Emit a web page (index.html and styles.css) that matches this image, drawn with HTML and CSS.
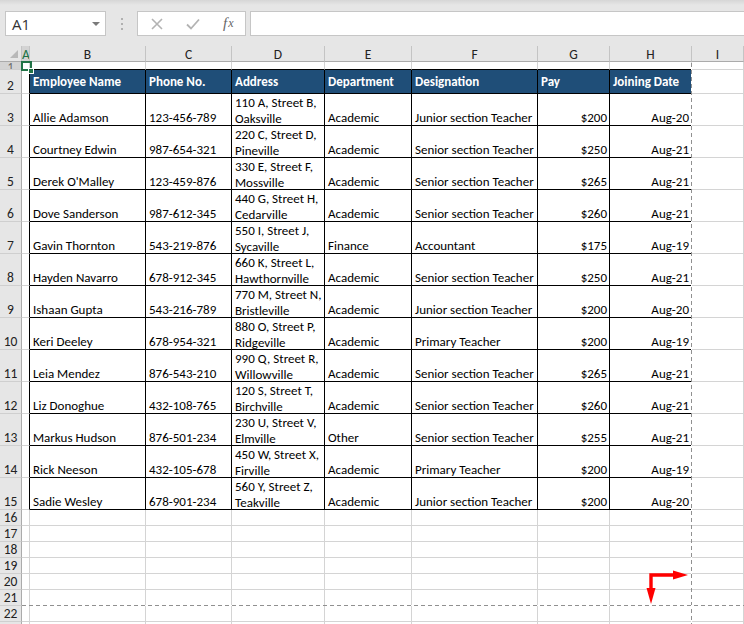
FILE: index.html
```html
<!DOCTYPE html>
<html>
<head>
<meta charset="utf-8">
<link rel="stylesheet" href="styles.css">
</head>
<body>
<div class="app">
  <div class="fbar">
    <div class="namebox"><span>A1</span><span class="caret"></span></div>
    <div class="dots"><i></i><i></i><i></i></div>
    <div class="btns">
      <span class="btn"><svg width="12" height="12" viewBox="0 0 12 12"><path d="M1 1L11 11M11 1L1 11" stroke="#b3b3b3" stroke-width="1.6" fill="none"/></svg></span>
      <span class="btn"><svg width="14" height="12" viewBox="0 0 14 12"><path d="M1 6.5L5 10.5L13 1.5" stroke="#b3b3b3" stroke-width="1.8" fill="none"/></svg></span>
      <span class="btn fx"><i>f</i><i class="x">x</i></span>
    </div>
    <div class="finput"></div>
  </div>

  <div class="sheet">
    <div class="ch corner"><span class="tri"></span></div>
    <div class="ch chsel">A</div><div class="ch">B</div><div class="ch">C</div><div class="ch">D</div><div class="ch">E</div><div class="ch">F</div><div class="ch">G</div><div class="ch">H</div><div class="ch">I</div>

    <div class="rh rh1 rhsel">1</div>
    <div class="c"></div><div class="c bb"></div><div class="c bb"></div><div class="c bb"></div><div class="c bb"></div><div class="c bb"></div><div class="c bb"></div><div class="c bb"></div><div class="c"></div>

    <div class="rh">2</div>
    <div class="c br"></div>
    <div class="c t th">Employee Name</div><div class="c t th">Phone No.</div><div class="c t th">Address</div><div class="c t th">Department</div><div class="c t th">Designation</div><div class="c t th">Pay</div><div class="c t th">Joining Date</div>
    <div class="c"></div>

    <div class="rh">3</div><div class="c br"></div>
    <div class="c t">Allie Adamson</div><div class="c t">123-456-789</div><div class="c t"><span class="w">110 A, Street B,<br>Oaksville</span></div><div class="c t">Academic</div><div class="c t">Junior section Teacher</div><div class="c t r">$200</div><div class="c t r">Aug-20</div><div class="c"></div>

    <div class="rh">4</div><div class="c br"></div>
    <div class="c t">Courtney Edwin</div><div class="c t">987-654-321</div><div class="c t"><span class="w">220 C, Street D,<br>Pineville</span></div><div class="c t">Academic</div><div class="c t">Senior section Teacher</div><div class="c t r">$250</div><div class="c t r">Aug-21</div><div class="c"></div>

    <div class="rh">5</div><div class="c br"></div>
    <div class="c t">Derek O'Malley</div><div class="c t">123-459-876</div><div class="c t"><span class="w">330 E, Street F,<br>Mossville</span></div><div class="c t">Academic</div><div class="c t">Senior section Teacher</div><div class="c t r">$265</div><div class="c t r">Aug-21</div><div class="c"></div>

    <div class="rh">6</div><div class="c br"></div>
    <div class="c t">Dove Sanderson</div><div class="c t">987-612-345</div><div class="c t"><span class="w">440 G, Street H,<br>Cedarville</span></div><div class="c t">Academic</div><div class="c t">Senior section Teacher</div><div class="c t r">$260</div><div class="c t r">Aug-21</div><div class="c"></div>

    <div class="rh">7</div><div class="c br"></div>
    <div class="c t">Gavin Thornton</div><div class="c t">543-219-876</div><div class="c t"><span class="w">550 I, Street J,<br>Sycaville</span></div><div class="c t">Finance</div><div class="c t">Accountant</div><div class="c t r">$175</div><div class="c t r">Aug-19</div><div class="c"></div>

    <div class="rh">8</div><div class="c br"></div>
    <div class="c t">Hayden Navarro</div><div class="c t">678-912-345</div><div class="c t"><span class="w">660 K, Street L,<br>Hawthornville</span></div><div class="c t">Academic</div><div class="c t">Senior section Teacher</div><div class="c t r">$250</div><div class="c t r">Aug-21</div><div class="c"></div>

    <div class="rh">9</div><div class="c br"></div>
    <div class="c t">Ishaan Gupta</div><div class="c t">543-216-789</div><div class="c t"><span class="w">770 M, Street N,<br>Bristleville</span></div><div class="c t">Academic</div><div class="c t">Junior section Teacher</div><div class="c t r">$200</div><div class="c t r">Aug-20</div><div class="c"></div>

    <div class="rh">10</div><div class="c br"></div>
    <div class="c t">Keri Deeley</div><div class="c t">678-954-321</div><div class="c t"><span class="w">880 O, Street P,<br>Ridgeville</span></div><div class="c t">Academic</div><div class="c t">Primary Teacher</div><div class="c t r">$200</div><div class="c t r">Aug-19</div><div class="c"></div>

    <div class="rh">11</div><div class="c br"></div>
    <div class="c t">Leia Mendez</div><div class="c t">876-543-210</div><div class="c t"><span class="w">990 Q, Street R,<br>Willowville</span></div><div class="c t">Academic</div><div class="c t">Senior section Teacher</div><div class="c t r">$265</div><div class="c t r">Aug-21</div><div class="c"></div>

    <div class="rh">12</div><div class="c br"></div>
    <div class="c t">Liz Donoghue</div><div class="c t">432-108-765</div><div class="c t"><span class="w">120 S, Street T,<br>Birchville</span></div><div class="c t">Academic</div><div class="c t">Senior section Teacher</div><div class="c t r">$260</div><div class="c t r">Aug-21</div><div class="c"></div>

    <div class="rh">13</div><div class="c br"></div>
    <div class="c t">Markus Hudson</div><div class="c t">876-501-234</div><div class="c t"><span class="w">230 U, Street V,<br>Elmville</span></div><div class="c t">Other</div><div class="c t">Senior section Teacher</div><div class="c t r">$255</div><div class="c t r">Aug-21</div><div class="c"></div>

    <div class="rh">14</div><div class="c br"></div>
    <div class="c t">Rick Neeson</div><div class="c t">432-105-678</div><div class="c t"><span class="w">450 W, Street X,<br>Firville</span></div><div class="c t">Academic</div><div class="c t">Primary Teacher</div><div class="c t r">$200</div><div class="c t r">Aug-19</div><div class="c"></div>

    <div class="rh">15</div><div class="c br"></div>
    <div class="c t">Sadie Wesley</div><div class="c t">678-901-234</div><div class="c t"><span class="w">560 Y, Street Z,<br>Teakville</span></div><div class="c t">Academic</div><div class="c t">Junior section Teacher</div><div class="c t r">$200</div><div class="c t r">Aug-20</div><div class="c"></div>

    <div class="rh">16</div><div class="c"></div><div class="c"></div><div class="c"></div><div class="c"></div><div class="c"></div><div class="c"></div><div class="c"></div><div class="c"></div><div class="c"></div>
    <div class="rh">17</div><div class="c"></div><div class="c"></div><div class="c"></div><div class="c"></div><div class="c"></div><div class="c"></div><div class="c"></div><div class="c"></div><div class="c"></div>
    <div class="rh">18</div><div class="c"></div><div class="c"></div><div class="c"></div><div class="c"></div><div class="c"></div><div class="c"></div><div class="c"></div><div class="c"></div><div class="c"></div>
    <div class="rh">19</div><div class="c"></div><div class="c"></div><div class="c"></div><div class="c"></div><div class="c"></div><div class="c"></div><div class="c"></div><div class="c"></div><div class="c"></div>
    <div class="rh">20</div><div class="c"></div><div class="c"></div><div class="c"></div><div class="c"></div><div class="c"></div><div class="c"></div><div class="c"></div><div class="c"></div><div class="c"></div>
    <div class="rh">21</div><div class="c"></div><div class="c"></div><div class="c"></div><div class="c"></div><div class="c"></div><div class="c"></div><div class="c"></div><div class="c"></div><div class="c"></div>
    <div class="rh">22</div><div class="c"></div><div class="c"></div><div class="c"></div><div class="c"></div><div class="c"></div><div class="c"></div><div class="c"></div><div class="c"></div><div class="c"></div>
    <div class="rh">23</div><div class="c"></div><div class="c"></div><div class="c"></div><div class="c"></div><div class="c"></div><div class="c"></div><div class="c"></div><div class="c"></div><div class="c"></div>
  </div>

  <div class="pb-v"></div>
  <div class="pb-h"></div>
  <div class="sel"></div>
  <div class="handle"></div>
  <svg class="arrows" width="56" height="50" viewBox="0 0 56 50">
    <path d="M35 15H11V30" stroke="#ff0000" stroke-width="3.4" fill="none" stroke-linejoin="miter"/>
    <polygon points="33,10.5 48,15 33,19.5" fill="#ff0000"/>
    <polygon points="6.5,28 11,44 15.5,28" fill="#ff0000"/>
  </svg>
</div>
</body>
</html>
```

FILE: styles.css
```css
* { box-sizing: border-box; }
html, body { margin: 0; padding: 0; }
body {
  width: 744px;
  height: 624px;
  overflow: hidden;
  background: #ffffff;
  font-family: Carlito, Calibri, Lato, "Liberation Sans", sans-serif;
}
.app {
  position: relative;
  width: 744px;
  height: 624px;
  overflow: hidden;
}

/* formula bar */
.fbar {
  height: 46px;
  background: linear-gradient(#d6d6d6, #e6e6e6 5px, #e6e6e6);
  display: flex;
  align-items: flex-start;
  padding: 11px 0 0 5px;
  font-family: "Segoe UI", "Open Sans", "Liberation Sans", sans-serif;
}
.namebox {
  width: 101px;
  height: 25px;
  background: #fff;
  border: 1px solid #c6c6c6;
  display: flex;
  align-items: center;
  justify-content: space-between;
  padding: 0 5px 0 6px;
  font-size: 15px;
  color: #333;
}
.caret {
  width: 0;
  height: 0;
  border-left: 4px solid transparent;
  border-right: 4px solid transparent;
  border-top: 4px solid #7a7a7a;
}
.dots {
  width: 31px;
  height: 25px;
  display: flex;
  flex-direction: column;
  align-items: center;
  justify-content: center;
  gap: 3px;
}
.dots i {
  display: block;
  width: 2px;
  height: 2px;
  background: #b0b0b0;
}
.btns {
  width: 109px;
  height: 25px;
  background: #fff;
  border: 1px solid #c6c6c6;
  display: flex;
  align-items: center;
}
.btn {
  display: flex;
  align-items: center;
  justify-content: center;
  height: 23px;
  width: 37px;
}
.btn:first-child { width: 38px; }
.btn.fx { width: 34px; }
.fx i {
  font-family: "Liberation Serif", "DejaVu Serif", serif;
  font-style: italic;
  font-size: 15px;
  color: #666;
}
.fx .x { font-size: 12px; margin-left: 1px; }
.finput {
  flex: 1;
  height: 25px;
  margin-left: 4px;
  background: #fff;
  border: 1px solid #c6c6c6;
  border-right: none;
}

/* sheet grid */
.sheet {
  display: grid;
  grid-template-columns: 22px 8px 116px 86px 93px 87px 126px 72px 82px 52px;
  grid-template-rows: 16px 8px 24px repeat(13, 32px) repeat(8, 16px);
}
.ch {
  background: #e6e6e6;
  border-right: 1px solid #c4c4c4;
  border-bottom: 1px solid #ababab;
  font-size: 13.5px;
  line-height: 15px;
  padding-top: 1px;
  color: #222;
  text-align: center;
  overflow: hidden;
}
.corner { position: relative; }
.tri {
  position: absolute;
  right: 3px;
  bottom: 3px;
  width: 0;
  height: 0;
  border-left: 8px solid transparent;
  border-bottom: 8px solid #b8b8b8;
}
.chsel {
  background: #d3d3d3;
  color: #217346;
}
.rh {
  background: #e6e6e6;
  border-right: 1px solid #ababab;
  border-bottom: 1px solid #cfcfcf;
  font-size: 13.5px;
  line-height: 14px;
  padding-bottom: 0;
  color: #222;
  display: flex;
  align-items: flex-end;
  justify-content: center;
  overflow: hidden;
}
.rh1 {
  align-items: flex-start;
  line-height: 10px;
  font-size: 12px;
  color: #666;
}
.rhsel { background: #d3d3d3; }

.c {
  border-right: 1px solid #d4d4d4;
  border-bottom: 1px solid #d4d4d4;
  overflow: hidden;
  white-space: nowrap;
  display: flex;
  align-items: flex-end;
  font-size: 13px;
  line-height: 14px;
  padding: 0 2px 0 3px;
  color: #000;
}
.c .w {
  line-height: 15.5px;
  margin-bottom: -1px;
}
.c.t { border-right-color: #000; border-bottom-color: #000; }
.c.bb { border-bottom-color: #000; }
.c.br { border-right-color: #000; }
.c.th {
  background: #1f4e78;
  color: #fff;
  font-weight: bold;
  align-items: center;
  padding-top: 1px;
}
.c.r { justify-content: flex-end; }

/* overlays */
.pb-v {
  position: absolute;
  left: 691px;
  top: 63px;
  width: 1px;
  height: 561px;
  background: repeating-linear-gradient(to bottom, #909090 0 4px, #ffffff 4px 7px);
}
.pb-h {
  position: absolute;
  left: 22px;
  top: 605px;
  width: 722px;
  height: 1px;
  background: repeating-linear-gradient(to right, #909090 0 4px, #ffffff 4px 7px);
}
.sel {
  position: absolute;
  left: 21px;
  top: 61px;
  width: 11px;
  height: 10px;
  border: 2px solid #217346;
}
.handle {
  position: absolute;
  left: 28px;
  top: 68px;
  width: 6px;
  height: 6px;
  background: #217346;
  border: 1px solid #fff;
}
.arrows {
  position: absolute;
  left: 640px;
  top: 560px;
}
```
